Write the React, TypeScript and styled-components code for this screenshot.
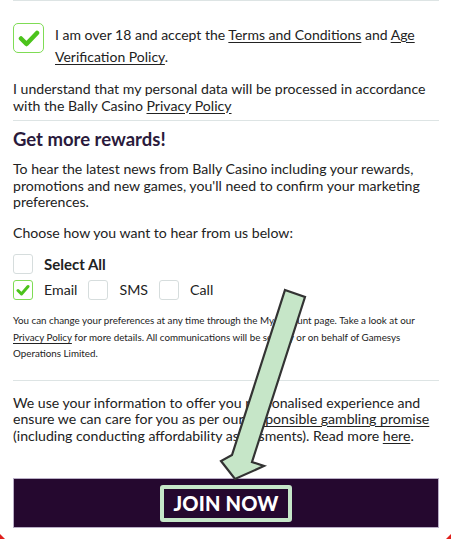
import React from "react";
import styled, { createGlobalStyle } from "styled-components";

const GlobalStyle = createGlobalStyle`
    html, body {
        margin: 0;
        padding: 0;
        background: #ffffff;
    }
    body {
        font-family: "Lato", "Noto Sans", sans-serif;
        color: #222222;
    }
`;

const Page = styled.div`
    position: relative;
    width: 451px;
    height: 560px;
    overflow: hidden;
    background: #ffffff;
`;

const Content = styled.div`
    padding: 0 12px 0 13px;
    display: flex;
    flex-direction: column;
`;

const Divider = styled.hr<{ $top?: number; $bottom?: number }>`
    border: none;
    border-top: 1.5px solid #dde4e4;
    margin: ${p => p.$top ?? 0}px 0 ${p => p.$bottom ?? 0}px;
`;

const AgeRow = styled.div`
    display: flex;
    align-items: flex-start;
    gap: 11px;
    margin-top: 22px;
`;

const AgeText = styled.p`
    margin: 1px 0 0;
    font-size: 14px;
    line-height: 22px;
    white-space: nowrap;
`;

const Paragraph = styled.p<{ $top?: number }>`
    margin: ${p => p.$top ?? 0}px 0 0;
    font-size: 14.1px;
    line-height: 16.5px;
    white-space: nowrap;
`;

const SmallPrint = styled.p`
    margin: 12px 0 0;
    font-size: 9.8px;
    line-height: 16.5px;
    white-space: nowrap;
`;

const TextLink = styled.a`
    color: inherit;
    text-decoration: underline;
    text-underline-offset: 2px;
    cursor: pointer;
`;

const Heading = styled.h2`
    margin: 6px 0 0;
    font-size: 18.5px;
    line-height: 24px;
    font-weight: 700;
    color: #2a1a3c;
`;

const Box = styled.span<{ $checked?: boolean; $big?: boolean }>`
    flex: none;
    display: inline-flex;
    align-items: center;
    justify-content: center;
    box-sizing: border-box;
    width: ${p => (p.$big ? 31 : 20)}px;
    height: ${p => (p.$big ? 30 : 20)}px;
    border-radius: ${p => (p.$big ? 5 : 3)}px;
    border: ${p => (p.$big ? 1.5 : 1)}px solid ${p => (p.$checked ? "#7fdc55" : "#d6dddd")};
    background: #ffffff;
`;

const OptionRow = styled.div<{ $top?: number }>`
    display: flex;
    align-items: center;
    gap: 11px;
    margin-top: ${p => p.$top ?? 0}px;
`;

const OptionLabel = styled.span<{ $bold?: boolean }>`
    font-size: ${p => (p.$bold ? 15 : 14.2)}px;
    font-weight: ${p => (p.$bold ? 700 : 400)};
    line-height: 20px;
`;

const JoinBar = styled.button`
    margin-top: 34px;
    height: 50px;
    box-sizing: border-box;
    display: flex;
    align-items: center;
    justify-content: center;
    background: #25082f;
    border: 1px solid #b9aec6;
    padding: 0;
    cursor: pointer;
`;

const HighlightBox = styled.span`
    display: inline-flex;
    align-items: center;
    justify-content: center;
    box-sizing: border-box;
    width: 132px;
    height: 37px;
    border: 4px solid #c6e6c9;
    border-radius: 3px;
    color: #ffffff;
    font-family: "Lato", "Noto Sans", sans-serif;
    font-size: 20px;
    font-weight: 900;
    letter-spacing: 0.2px;
`;

const ArrowLayer = styled.svg`
    position: absolute;
    left: 0;
    top: 0;
    pointer-events: none;
`;

const CornerMark = styled.span<{ $side: "left" | "right" }>`
    position: absolute;
    top: 534px;
    ${p => p.$side}: 0;
    width: 0;
    height: 0;
    border-bottom: 5px solid #e0201c;
    ${p => (p.$side === "left" ? "border-right" : "border-left")}: 5px solid transparent;
`;

const Check = ({ big }: { big?: boolean }) =>
    big ? (
        <svg width="22" height="18" viewBox="0 0 22 18">
            <path d="M3 9.5 L8.5 15 L19 4" fill="none" stroke="#4cc31c" strokeWidth="4.5" strokeLinecap="round" strokeLinejoin="round" />
        </svg>
    ) : (
        <svg width="14" height="12" viewBox="0 0 14 12">
            <path d="M2 6.5 L5.5 10 L12 2.5" fill="none" stroke="#4cc31c" strokeWidth="3" strokeLinecap="round" strokeLinejoin="round" />
        </svg>
    );

const Checkbox = ({ checked, big }: { checked?: boolean; big?: boolean }) => (
    <Box $checked={checked} $big={big}>
        {checked && <Check big={big} />}
    </Box>
);

const App = () => {
    return (
        <>
            <GlobalStyle />
            <Page>
                <Content>
                    <Divider />
                    <AgeRow>
                        <Checkbox checked big />
                        <AgeText>
                            I am over 18 and accept the <TextLink>Terms and Conditions</TextLink> and <TextLink>Age</TextLink>
                            <br />
                            <TextLink>Verification Policy</TextLink>.
                        </AgeText>
                    </AgeRow>
                    <Paragraph $top={13}>
                        I understand that my personal data will be processed in accordance
                        <br />
                        with the Bally Casino <TextLink>Privacy Policy</TextLink>
                    </Paragraph>
                    <Divider $top={6} />
                    <Heading>Get more rewards!</Heading>
                    <Paragraph $top={10}>
                        To hear the latest news from Bally Casino including your rewards,
                        <br />
                        promotions and new games, you'll need to confirm your marketing
                        <br />
                        preferences.
                    </Paragraph>
                    <Paragraph $top={14}>Choose how you want to hear from us below:</Paragraph>
                    <OptionRow $top={13}>
                        <Checkbox />
                        <OptionLabel $bold>Select All</OptionLabel>
                    </OptionRow>
                    <OptionRow $top={6}>
                        <Checkbox checked />
                        <OptionLabel>Email</OptionLabel>
                        <Checkbox />
                        <OptionLabel>SMS</OptionLabel>
                        <Checkbox />
                        <OptionLabel>Call</OptionLabel>
                    </OptionRow>
                    <SmallPrint>
                        You can change your preferences at any time through the My Account page. Take a look at our
                        <br />
                        <TextLink>Privacy Policy</TextLink> for more details. All communications will be sent by or on
                        behalf of Gamesys
                        <br />
                        Operations Limited.
                    </SmallPrint>
                    <Divider $top={18} />
                    <Paragraph $top={14}>
                        We use your information to offer you personalised experience and
                        <br />
                        ensure we can care for you as per our <TextLink>responsible gambling promise</TextLink>
                        <br />
                        (including conducting affordability assessments). Read more <TextLink>here</TextLink>.
                    </Paragraph>
                    <JoinBar>
                        <HighlightBox>JOIN NOW</HighlightBox>
                    </JoinBar>
                </Content>
                <ArrowLayer width="451" height="560" viewBox="0 0 451 560">
                    <polygon
                        points="285,290 305,297 252,462 264,466 235,479 221,461 232,455"
                        fill="#c6e6c8"
                        stroke="#333333"
                        strokeWidth="2.2"
                        strokeLinejoin="miter"
                    />
                </ArrowLayer>
                <CornerMark $side="left" />
                <CornerMark $side="right" />
            </Page>
        </>
    );
};

export default App;
